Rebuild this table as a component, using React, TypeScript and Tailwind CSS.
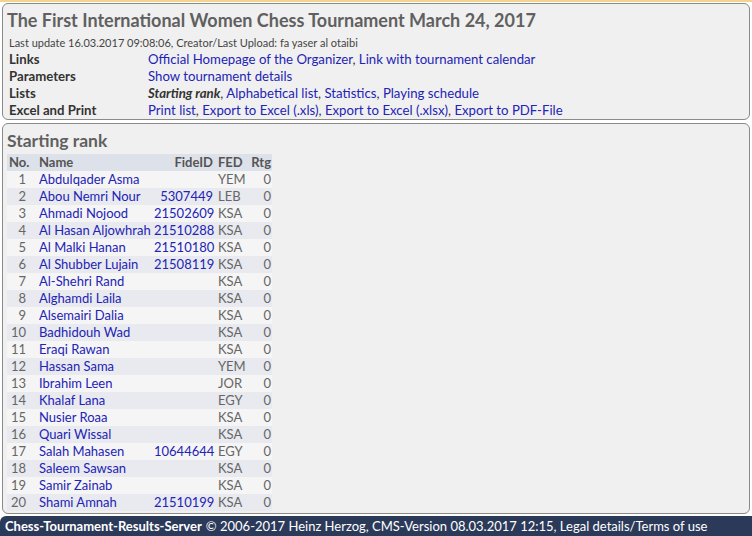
const PLAYERS: [number, string, string, string][] = [
  [1, "Abdulqader Asma", "", "YEM"],
  [2, "Abou Nemri Nour", "5307449", "LEB"],
  [3, "Ahmadi Nojood", "21502609", "KSA"],
  [4, "Al Hasan Aljowhrah", "21510288", "KSA"],
  [5, "Al Malki Hanan", "21510180", "KSA"],
  [6, "Al Shubber Lujain", "21508119", "KSA"],
  [7, "Al-Shehri Rand", "", "KSA"],
  [8, "Alghamdi Laila", "", "KSA"],
  [9, "Alsemairi Dalia", "", "KSA"],
  [10, "Badhidouh Wad", "", "KSA"],
  [11, "Eraqi Rawan", "", "KSA"],
  [12, "Hassan Sama", "", "YEM"],
  [13, "Ibrahim Leen", "", "JOR"],
  [14, "Khalaf Lana", "", "EGY"],
  [15, "Nusier Roaa", "", "KSA"],
  [16, "Quari Wissal", "", "KSA"],
  [17, "Salah Mahasen", "10644644", "EGY"],
  [18, "Saleem Sawsan", "", "KSA"],
  [19, "Samir Zainab", "", "KSA"],
  [20, "Shami Amnah", "21510199", "KSA"],
];

const LINK = "text-[#2323b5]";

function InfoRow({ label, children }: { label: string; children: React.ReactNode }) {
  return (
    <div className="flex h-[17px] items-center whitespace-nowrap">
      <span className="w-[139px] font-bold text-[#333]">{label}</span>
      <span className={LINK}>{children}</span>
    </div>
  );
}

const Comma = () => <span className="text-[#333]">, </span>;

export default function App() {
  return (
    <div className="h-[536px] w-[752px] overflow-hidden border-t-2 border-[#f3d48e] bg-white font-['Lato',sans-serif] text-[13px] text-[#333]">
      <div className="mx-[2px] mt-[1px] h-[117px] rounded-[6px] border border-[#8a8a8a] bg-[#f0f0f0] px-[4px]">
        <h1 className="h-[32px] whitespace-nowrap text-[18px] font-bold leading-[33px] text-[#606060]">
          The First International Women Chess Tournament March 24, 2017
        </h1>
        <div className="flex h-[15px] items-center whitespace-nowrap pl-[2px] text-[11px] text-[#444]">
          Last update 16.03.2017 09:08:06, Creator/Last Upload: fa yaser al otaibi
        </div>
        <div className="pl-[2px] text-[13.2px]">
          <InfoRow label="Links">
            Official Homepage of the Organizer<Comma />Link with tournament calendar
          </InfoRow>
          <InfoRow label="Parameters">Show tournament details</InfoRow>
          <InfoRow label="Lists">
            <b className="italic text-[#333]">Starting rank</b>
            <Comma />Alphabetical list<Comma />Statistics<Comma />Playing schedule
          </InfoRow>
          <InfoRow label="Excel and Print">
            Print list<Comma />Export to Excel (.xls)<Comma />Export to Excel (.xlsx)<Comma />Export to PDF-File
          </InfoRow>
        </div>
      </div>

      <div className="mx-[2px] mt-[3px] h-[391px] rounded-[6px] border border-[#8a8a8a] bg-[#f0f0f0] px-[4px]">
        <h2 className="h-[30px] text-[17.5px] font-bold leading-[33px] text-[#606060]">Starting rank</h2>
        <table className="w-[265px] table-fixed border-collapse whitespace-nowrap text-[13px]">
          <colgroup>
            <col className="w-[27px]" />
            <col className="w-[120px]" />
            <col className="w-[60px]" />
            <col className="w-[32px]" />
            <col className="w-[26px]" />
          </colgroup>
          <thead>
            <tr className="h-[17px] bg-[#dde1ea] leading-[17px] text-[#555]">
              <th className="pl-[2px] text-left font-bold">No.</th>
              <th className="pl-[5px] text-left font-bold">Name</th>
              <th className="pr-[1px] text-right font-bold">FideID</th>
              <th className="pl-[4px] text-left font-bold">FED</th>
              <th className="pr-[1px] text-right font-bold">Rtg</th>
            </tr>
          </thead>
          <tbody>
            {PLAYERS.map(([no, name, fide, fed]) => (
              <tr key={no} className={`h-[17px] leading-[17px] ${no % 2 === 0 ? "bg-[#e8eaef]" : "bg-[#f5f5f5]"}`}>
                <td className="pr-[8px] text-right text-[#666]">{no}</td>
                <td className={`pl-[5px] ${LINK}`}>{name}</td>
                <td className={`pr-[1px] text-right ${LINK}`}>{fide}</td>
                <td className="pl-[4px] text-[#666]">{fed}</td>
                <td className="pr-[1px] text-right text-[#666]">0</td>
              </tr>
            ))}
          </tbody>
        </table>
      </div>

      <div className="mt-[2px] flex h-[21px] items-center whitespace-nowrap rounded-tl-[6px] bg-[#2c3a5a] px-[5px] text-[13px] text-white">
        <b>Chess-Tournament-Results-Server</b>
        <span className="ml-[4px]">© 2006-2017 Heinz Herzog, CMS-Version 08.03.2017 12:15, Legal details/Terms of use</span>
      </div>
    </div>
  );
}
